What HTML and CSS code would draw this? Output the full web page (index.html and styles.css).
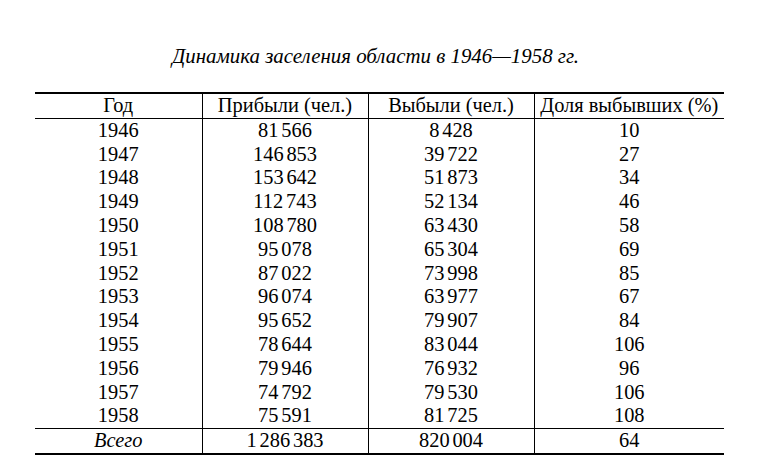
FILE: index.html
```html
<!DOCTYPE html>
<html lang="ru">
<head>
<meta charset="utf-8">
<title>Динамика заселения области</title>
<link rel="stylesheet" href="styles.css">
</head>
<body>
<div class="page">
  <p class="caption">Динамика заселения области в 1946—1958 гг.</p>
  <table class="data">
    <colgroup>
      <col class="c1"><col class="c2"><col class="c3"><col class="c4">
    </colgroup>
    <thead>
      <tr><th>Год</th><th>Прибыли (чел.)</th><th>Выбыли (чел.)</th><th>Доля выбывших (%)</th></tr>
    </thead>
    <tbody>
      <tr><td>1946</td><td>81<span class="sp"></span>566</td><td>8<span class="sp"></span>428</td><td>10</td></tr>
      <tr><td>1947</td><td>146<span class="sp"></span>853</td><td>39<span class="sp"></span>722</td><td>27</td></tr>
      <tr><td>1948</td><td>153<span class="sp"></span>642</td><td>51<span class="sp"></span>873</td><td>34</td></tr>
      <tr><td>1949</td><td>112<span class="sp"></span>743</td><td>52<span class="sp"></span>134</td><td>46</td></tr>
      <tr><td>1950</td><td>108<span class="sp"></span>780</td><td>63<span class="sp"></span>430</td><td>58</td></tr>
      <tr><td>1951</td><td>95<span class="sp"></span>078</td><td>65<span class="sp"></span>304</td><td>69</td></tr>
      <tr><td>1952</td><td>87<span class="sp"></span>022</td><td>73<span class="sp"></span>998</td><td>85</td></tr>
      <tr><td>1953</td><td>96<span class="sp"></span>074</td><td>63<span class="sp"></span>977</td><td>67</td></tr>
      <tr><td>1954</td><td>95<span class="sp"></span>652</td><td>79<span class="sp"></span>907</td><td>84</td></tr>
      <tr><td>1955</td><td>78<span class="sp"></span>644</td><td>83<span class="sp"></span>044</td><td>106</td></tr>
      <tr><td>1956</td><td>79<span class="sp"></span>946</td><td>76<span class="sp"></span>932</td><td>96</td></tr>
      <tr><td>1957</td><td>74<span class="sp"></span>792</td><td>79<span class="sp"></span>530</td><td>106</td></tr>
      <tr><td>1958</td><td>75<span class="sp"></span>591</td><td>81<span class="sp"></span>725</td><td>108</td></tr>
    </tbody>
    <tfoot>
      <tr><td class="total">Всего</td><td>1<span class="sp"></span>286<span class="sp"></span>383</td><td>820<span class="sp"></span>004</td><td>64</td></tr>
    </tfoot>
  </table>
</div>
</body>
</html>
```

FILE: styles.css
```css
html, body {
  margin: 0;
  padding: 0;
  background: #ffffff;
}
.page {
  width: 759px;
  height: 474px;
  font-family: "Liberation Serif", "Times New Roman", serif;
  color: #000;
  padding-top: 43px;
  box-sizing: border-box;
}
.caption {
  margin: 0 0 23px 0;
  text-align: center;
  font-style: italic;
  font-size: 20.9px;
  line-height: 26px;
  padding-right: 8px;
}
.data {
  margin-left: 35px;
  width: 689px;
  border-collapse: collapse;
  table-layout: fixed;
  font-size: 20.4px;
}
.c1 { width: 167px; }
.c2 { width: 166px; }
.c3 { width: 166px; }
.c4 { width: 190px; }
.data th, .data td {
  padding: 0 0 1px 0;
  text-align: center;
  font-weight: normal;
  height: 22.8px;
  line-height: 22.8px;
  border-left: 1px solid #000;
}
.data th:first-child, .data td:first-child {
  border-left: none;
}
.sp {
  display: inline-block;
  width: 0.14em;
}
.data thead tr {
  border-top: 2px solid #000;
  border-bottom: 1px solid #000;
}
.data tfoot tr {
  border-top: 1px solid #000;
  border-bottom: 2px solid #000;
}
.data .total {
  font-style: italic;
}
```
